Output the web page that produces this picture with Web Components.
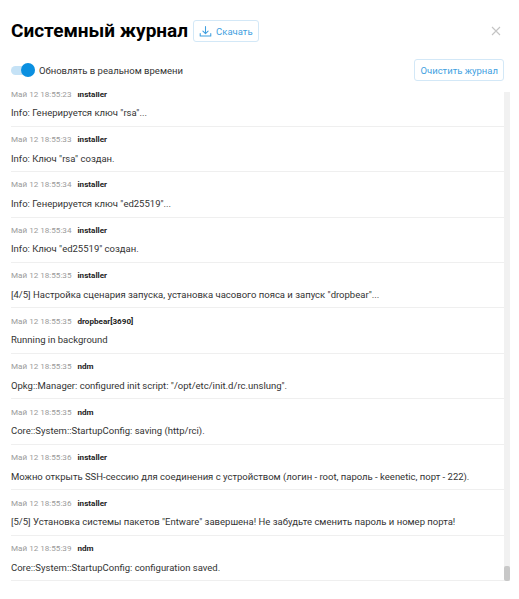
<!DOCTYPE html>
<html lang="ru">
<head>
<meta charset="utf-8">
<title>Системный журнал</title>
<style>
html, body { margin: 0; height: 100%; background: #fff; }
body { font-family: Roboto, "Liberation Sans", sans-serif; color: #1d1d1f; overflow: hidden; }
</style>
</head>
<body>
<log-dialog>
  <log-entry time="Май 12 18:55:23" source="installer">Info: Генерируется ключ "rsa"...</log-entry>
  <log-entry time="Май 12 18:55:33" source="installer">Info: Ключ "rsa" создан.</log-entry>
  <log-entry time="Май 12 18:55:34" source="installer">Info: Генерируется ключ "ed25519"...</log-entry>
  <log-entry time="Май 12 18:55:34" source="installer">Info: Ключ "ed25519" создан.</log-entry>
  <log-entry time="Май 12 18:55:35" source="installer">[4/5] Настройка сценария запуска, установка часового пояса и запуск "dropbear"...</log-entry>
  <log-entry time="Май 12 18:55:35" source="dropbear[3690]">Running in background</log-entry>
  <log-entry time="Май 12 18:55:35" source="ndm">Opkg::Manager: configured init script: "/opt/etc/init.d/rc.unslung".</log-entry>
  <log-entry time="Май 12 18:55:35" source="ndm">Core::System::StartupConfig: saving (http/rci).</log-entry>
  <log-entry time="Май 12 18:55:36" source="installer">Можно открыть SSH-сессию для соединения с устройством (логин - root, пароль - keenetic, порт - 222).</log-entry>
  <log-entry time="Май 12 18:55:36" source="installer">[5/5] Установка системы пакетов "Entware" завершена! Не забудьте сменить пароль и номер порта!</log-entry>
  <log-entry time="Май 12 18:55:39" source="ndm">Core::System::StartupConfig: configuration saved.</log-entry>
</log-dialog>

<script>
class OutlineButton extends HTMLElement {
    connectedCallback() {
        const shadow = this.attachShadow({ mode: "open" });
        shadow.innerHTML = `
          <style>
          :host { display: inline-flex; }
          button {
              display: inline-flex;
              align-items: center;
              gap: 4px;
              height: 22px;
              padding: 0 5px;
              box-sizing: border-box;
              background: #fff;
              border: 1px solid #d3e8f7;
              border-radius: 3px;
              color: #3f9fdf;
              font: 400 9.5px Roboto, sans-serif;
              white-space: nowrap;
          }
          ::slotted(svg) { width: 13px; height: 13px; }
          </style>
          <button><slot></slot></button>
        `;
    }
}

class ToggleSwitch extends HTMLElement {
    connectedCallback() {
        const shadow = this.attachShadow({ mode: "open" });
        shadow.innerHTML = `
          <style>
          :host { display: inline-flex; align-items: center; gap: 4px; font-size: 9.5px; color: #333; }
          .track {
              display: flex;
              justify-content: flex-end;
              align-items: center;
              width: 24px;
              height: 9px;
              border-radius: 5px;
              background: #c5e2f6;
          }
          .knob { width: 14px; height: 14px; border-radius: 50%; background: #0a8fe0; }
          </style>
          <span class="track"><span class="knob"></span></span>
          <slot></slot>
        `;
    }
}

class LogEntry extends HTMLElement {
    connectedCallback() {
        const shadow = this.attachShadow({ mode: "open" });
        shadow.innerHTML = `
          <style>
          :host {
              display: block;
              flex: none;
              height: 45.45px;
              box-sizing: border-box;
              padding-top: 6.4px;
              border-bottom: 1px solid #efefef;
          }
          .meta { display: flex; gap: 6px; height: 12px; line-height: 12px; font-size: 8.1px; }
          .time { color: #9a9a9a; }
          .source { color: #222; font-weight: 700; }
          .text { margin-top: 6.6px; line-height: 13px; font-size: 9.5px; color: #333; white-space: nowrap; }
          </style>
          <div class="meta"><span class="time"></span><span class="source"></span></div>
          <div class="text"><slot></slot></div>
        `;
        shadow.querySelector(".time").textContent = this.getAttribute("time");
        shadow.querySelector(".source").textContent = this.getAttribute("source");
    }
}

class LogDialog extends HTMLElement {
    connectedCallback() {
        const shadow = this.attachShadow({ mode: "open" });
        shadow.innerHTML = `
          <style>
          :host {
              display: flex;
              flex-direction: column;
              height: 599px;
              box-sizing: border-box;
              padding: 20px 9px 18px 11px;
          }
          header { display: flex; align-items: center; gap: 5px; height: 22px; }
          h1 { margin: 0; font-size: 19px; line-height: 22px; font-weight: 700; color: #000; }
          .close { margin-left: auto; margin-right: 9px; width: 10px; height: 10px; }
          .tools {
              display: flex;
              justify-content: space-between;
              align-items: center;
              margin-top: 17px;
              margin-right: 6px;
              height: 22px;
          }
          .body { display: flex; flex: 1; min-height: 0; margin-top: 11px; gap: 0; }
          .log {
              display: flex;
              flex-direction: column;
              justify-content: flex-end;
              flex: 1;
              min-width: 0;
              overflow: hidden;
          }
          .bar {
              display: flex;
              align-items: flex-end;
              flex: none;
              width: 6px;
              background: #f1f1f1;
          }
          .thumb { width: 100%; height: 15px; border-radius: 2px; background: #c8c8c8; }
          </style>
          <header>
            <h1>Системный журнал</h1>
            <outline-button>
              <svg viewBox="0 0 16 16" fill="none" stroke="#3f9fdf" stroke-width="1.3" stroke-linecap="round" stroke-linejoin="round">
                <path d="M8 2v8.5M4.8 7.5 8 10.7l3.2-3.2M1.5 10.5v3h13v-3"/>
              </svg>
              Скачать
            </outline-button>
            <svg class="close" viewBox="0 0 10 10" stroke="#c4c4c4" stroke-width="1.1"><path d="M1 1l8 8M9 1l-8 8"/></svg>
          </header>
          <div class="tools">
            <toggle-switch>Обновлять в реальном времени</toggle-switch>
            <outline-button>Очистить журнал</outline-button>
          </div>
          <div class="body">
            <div class="log"><slot></slot></div>
            <div class="bar"><div class="thumb"></div></div>
          </div>
        `;
    }
}

customElements.define("outline-button", OutlineButton);
customElements.define("toggle-switch", ToggleSwitch);
customElements.define("log-entry", LogEntry);
customElements.define("log-dialog", LogDialog);
</script>
</body>
</html>
